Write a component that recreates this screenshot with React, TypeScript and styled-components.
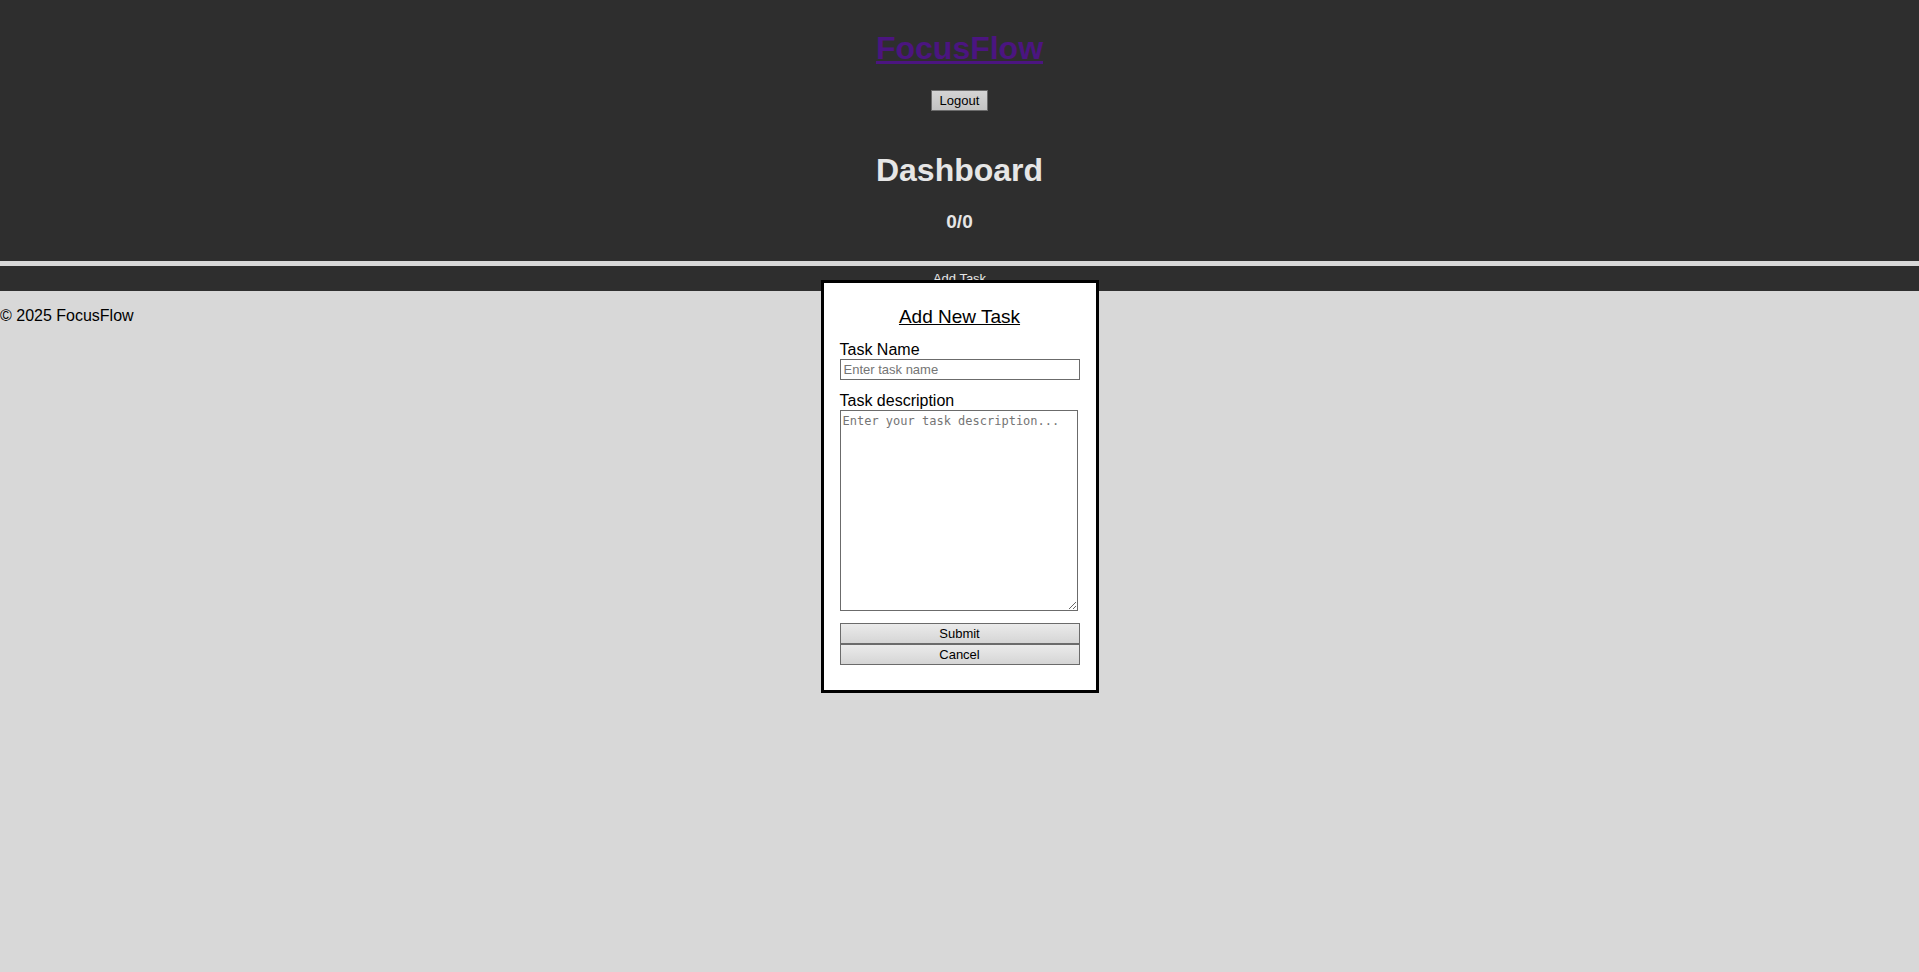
import React from "react";
import styled, { createGlobalStyle } from "styled-components";

const GlobalStyle = createGlobalStyle`
  body {
    margin: 0;
    background: #d8d8d8;
    color: #000;
    font-family: "Liberation Sans", Arial, sans-serif;
    font-size: 16px;
    line-height: 18px;
  }
`;

const Page = styled.div`
  position: relative;
  min-height: 100vh;
`;

const Header = styled.header`
  display: flex;
  flex-direction: column;
  align-items: center;
  padding: 10px 0;
  background: #2e2e2e;
`;

const Brand = styled.h1`
  margin: 20px 0 23px;
  font-size: 32px;
  line-height: 37px;

  a {
    color: #4b1580;
  }
`;

const Dashboard = styled.section`
  display: flex;
  flex-direction: column;
  align-items: center;
  padding: 10px 0;
  background: #2e2e2e;
  color: #e6e6e6;
`;

const Heading = styled.h2`
  margin: 21px 0 22px;
  font-size: 32px;
  line-height: 37px;
`;

const Progress = styled.h3`
  margin: 0 0 19px;
  font-size: 19px;
  line-height: 21px;
`;

const Button = styled.button<{ $dim?: boolean }>`
  box-sizing: border-box;
  height: 21px;
  padding: 0 8px;
  border: 1px solid #6b6b6b;
  border-radius: 0;
  background: ${(p) =>
    p.$dim
      ? "linear-gradient(#d4d4d4, #c2c2c2)"
      : "linear-gradient(#ebebeb, #d5d5d5)"};
  color: #000;
  font-family: inherit;
  font-size: 13px;
  line-height: 15px;
`;

const AddBar = styled.button`
  display: block;
  width: 100%;
  height: 25px;
  margin-top: 5px;
  padding: 0;
  border: 0;
  background: #2e2e2e;
  color: #e6e6e6;
  font-family: inherit;
  font-size: 13px;
  line-height: 15px;
`;

const Footer = styled.footer`
  padding: 16px 0;
`;

const Modal = styled.form`
  position: absolute;
  top: 280px;
  left: 50%;
  transform: translateX(-50%);
  box-sizing: border-box;
  display: flex;
  flex-direction: column;
  width: 278px;
  padding: 23px 16px 25px;
  border: 3px solid #000;
  background: #fff;
`;

const ModalTitle = styled.div`
  margin-bottom: 13px;
  font-size: 19px;
  line-height: 22px;
  text-align: center;
  text-decoration: underline;
`;

const Label = styled.label`
  display: block;
`;

const TextInput = styled.input`
  box-sizing: border-box;
  width: 100%;
  height: 21px;
  margin: 0 0 12px;
  padding: 1px 3px;
  border: 1px solid #6b6b6b;
  border-radius: 0;
  font-family: inherit;
  font-size: 13px;

  &::placeholder {
    color: #757575;
  }
`;

const TextArea = styled.textarea`
  box-sizing: border-box;
  width: 238px;
  height: 201px;
  margin: 0 0 12px;
  padding: 3px 2px;
  border: 1px solid #6b6b6b;
  font-family: "DejaVu Sans Mono", monospace;
  font-size: 12px;
  line-height: 15px;

  &::placeholder {
    color: #757575;
  }
`;

export default function App() {
  return (
    <>
      <GlobalStyle />
      <Page>
        <Header>
          <Brand>
            <a href="#">FocusFlow</a>
          </Brand>
          <Button type="button" $dim>
            Logout
          </Button>
        </Header>
        <main>
          <Dashboard>
            <Heading>Dashboard</Heading>
            <Progress>0/0</Progress>
          </Dashboard>
          <AddBar type="button">Add Task</AddBar>
        </main>
        <Footer>© 2025 FocusFlow</Footer>
        <Modal aria-labelledby="modal-title" onSubmit={(e) => e.preventDefault()}>
          <ModalTitle id="modal-title">Add New Task</ModalTitle>
          <Label htmlFor="task-name">Task Name</Label>
          <TextInput id="task-name" type="text" placeholder="Enter task name" />
          <Label htmlFor="task-description">Task description</Label>
          <TextArea
            id="task-description"
            placeholder="Enter your task description..."
          />
          <Button type="submit">Submit</Button>
          <Button type="button">Cancel</Button>
        </Modal>
      </Page>
    </>
  );
}
